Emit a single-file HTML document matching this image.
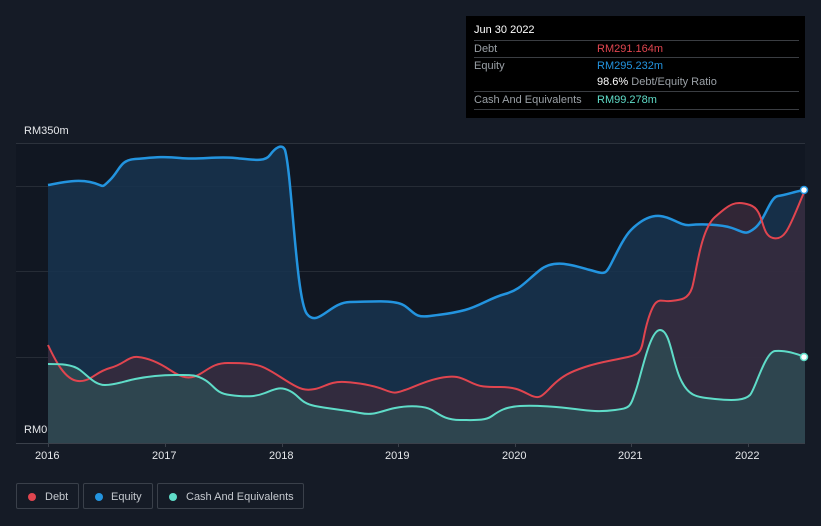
<!DOCTYPE html>
<html><head><style>
body{margin:0;background:#151b26;font-family:"Liberation Sans",sans-serif;}
.w{position:relative;width:821px;height:526px;overflow:hidden;}
.tt{position:absolute;left:466px;top:16px;width:339px;height:102px;background:#000;font-size:11px;color:#9aa0a6;}
.tt .r{position:absolute;left:8px;right:6px;border-top:1px solid #3a3d42;height:17px;line-height:17px}
.tt b{font-weight:normal;position:absolute;left:123px}
.lg{position:absolute;top:483px;height:26px;border:1px solid #3a404a;border-radius:2px;color:#c5c9cf;font-size:11px;line-height:26px;box-sizing:border-box}
.lg i{position:absolute;left:11px;top:9px;width:8px;height:8px;border-radius:50%}
.ax{position:absolute;color:#e6e8eb;font-size:11px}
</style></head><body><div class="w">
<svg width="821" height="526" style="position:absolute;left:0;top:0">
<rect x="16" y="143" width="789" height="300" fill="#111722"/>
<line x1="16" y1="143.5" x2="805" y2="143.5" stroke="#2c323c"/>
<line x1="16" y1="186.5" x2="805" y2="186.5" stroke="#262c36"/>
<line x1="16" y1="271.5" x2="805" y2="271.5" stroke="#262c36"/>
<line x1="16" y1="357.5" x2="805" y2="357.5" stroke="#262c36"/>
<path d="M48,185 C60,183 75,179 90,182 S100,190 110,180 S120,160 135,159 S160,156 180,158 S215,156 235,158 S265,162 270,155 S282,143 285,150 C292,175 296,300 307,314 S330,302 350,302 S395,299 405,306 S415,318 430,316 S450,314 465,310 S490,298 505,294 S525,282 540,270 S575,266 590,270 S605,276 612,262 S625,236 631,230 S648,215 660,216 S680,226 690,225 S720,224 732,228 S745,236 755,228 S770,197 778,196 S800,190 805,190 L805,443 L48,443 Z" fill="#18344f" fill-opacity=".85"/>
<path d="M48,345 C55,360 65,380 78,381 S95,372 110,368 S128,356 138,357 S158,362 170,370 S190,380 200,374 S215,363 228,363 S255,363 265,368 S280,377 290,383 S305,391 315,389 S330,381 345,382 S375,386 385,390 S396,393 405,390 S425,381 440,378 S460,377 470,382 S485,387 500,387 S520,390 530,395 S542,396 552,386 S570,372 585,367 S610,361 628,357 S640,346 648,320 S660,302 670,301 S688,300 692,288 S700,230 715,217 S735,200 750,205 S760,235 773,238 S790,225 805,190 L805,443 L48,443 Z" fill="#3a2a3c" fill-opacity=".8"/>
<path d="M48,364 C60,364 72,364 80,370 S95,385 105,385 S125,381 135,379 S160,375 175,375 S195,374 205,380 S215,393 230,395 S255,397 265,393 S280,386 290,391 S300,403 315,406 S345,410 360,413 S380,411 395,408 S425,406 432,410 S445,420 460,420 S485,421 492,416 S505,407 520,406 S560,407 575,409 S600,412 615,410 S630,408 636,390 S650,330 660,330 S672,360 680,378 S695,397 715,399 S745,400 750,395 S765,352 775,351 S795,353 805,357 L805,443 L48,443 Z" fill="#2e4a52" fill-opacity=".85"/>
<path d="M48,185 C60,183 75,179 90,182 S100,190 110,180 S120,160 135,159 S160,156 180,158 S215,156 235,158 S265,162 270,155 S282,143 285,150 C292,175 296,300 307,314 S330,302 350,302 S395,299 405,306 S415,318 430,316 S450,314 465,310 S490,298 505,294 S525,282 540,270 S575,266 590,270 S605,276 612,262 S625,236 631,230 S648,215 660,216 S680,226 690,225 S720,224 732,228 S745,236 755,228 S770,197 778,196 S800,190 805,190" fill="none" stroke="#2394df" stroke-width="2.5"/>
<path d="M48,345 C55,360 65,380 78,381 S95,372 110,368 S128,356 138,357 S158,362 170,370 S190,380 200,374 S215,363 228,363 S255,363 265,368 S280,377 290,383 S305,391 315,389 S330,381 345,382 S375,386 385,390 S396,393 405,390 S425,381 440,378 S460,377 470,382 S485,387 500,387 S520,390 530,395 S542,396 552,386 S570,372 585,367 S610,361 628,357 S640,346 648,320 S660,302 670,301 S688,300 692,288 S700,230 715,217 S735,200 750,205 S760,235 773,238 S790,225 805,190" fill="none" stroke="#e0454f" stroke-width="2"/>
<path d="M48,364 C60,364 72,364 80,370 S95,385 105,385 S125,381 135,379 S160,375 175,375 S195,374 205,380 S215,393 230,395 S255,397 265,393 S280,386 290,391 S300,403 315,406 S345,410 360,413 S380,411 395,408 S425,406 432,410 S445,420 460,420 S485,421 492,416 S505,407 520,406 S560,407 575,409 S600,412 615,410 S630,408 636,390 S650,330 660,330 S672,360 680,378 S695,397 715,399 S745,400 750,395 S765,352 775,351 S795,353 805,357" fill="none" stroke="#5fdcc8" stroke-width="2"/>
<line x1="16" y1="443.5" x2="805" y2="443.5" stroke="#3a404a"/>
<g stroke="#3a404a"><line x1="48.5" y1="443" x2="48.5" y2="447"/><line x1="165.5" y1="443" x2="165.5" y2="447"/><line x1="282.5" y1="443" x2="282.5" y2="447"/><line x1="398.5" y1="443" x2="398.5" y2="447"/><line x1="515.5" y1="443" x2="515.5" y2="447"/><line x1="631.5" y1="443" x2="631.5" y2="447"/><line x1="748.5" y1="443" x2="748.5" y2="447"/></g>
<circle cx="804" cy="190" r="3.5" fill="#fff" stroke="#2394df" stroke-width="1.5"/>
<circle cx="804" cy="357" r="3.5" fill="#fff" stroke="#5fdcc8" stroke-width="1.5"/>
</svg>
<div class="ax" style="left:24px;top:125px">RM350m</div>
<div class="ax" style="left:24px;top:424px">RM0</div>
<div class="ax" style="left:35px;top:450px">2016</div>
<div class="ax" style="left:152px;top:450px">2017</div>
<div class="ax" style="left:269px;top:450px">2018</div>
<div class="ax" style="left:385px;top:450px">2019</div>
<div class="ax" style="left:502px;top:450px">2020</div>
<div class="ax" style="left:618px;top:450px">2021</div>
<div class="ax" style="left:735px;top:450px">2022</div>
<div class="tt">
<div style="position:absolute;left:8px;top:8px;color:#fff">Jun 30 2022</div>
<div class="r" style="top:24px">Debt<b style="color:#e0454f">RM291.164m</b></div>
<div class="r" style="top:41px">Equity<b style="color:#2394df">RM295.232m</b></div>
<div class="r" style="top:58px;border:0"><b><span style="color:#fff">98.6%</span> Debt/Equity Ratio</b></div>
<div class="r" style="top:75px">Cash And Equivalents<b style="color:#5fdcc8">RM99.278m</b></div>
<div class="r" style="top:93px;height:0"></div>
</div>
<div class="lg" style="left:16px;width:63px"><i style="background:#e0454f"></i><span style="position:absolute;left:28px">Debt</span></div>
<div class="lg" style="left:83px;width:70px"><i style="background:#2394df"></i><span style="position:absolute;left:27px">Equity</span></div>
<div class="lg" style="left:157px;width:147px"><i style="background:#5fdcc8"></i><span style="position:absolute;left:28px">Cash And Equivalents</span></div>
</div></body></html>
